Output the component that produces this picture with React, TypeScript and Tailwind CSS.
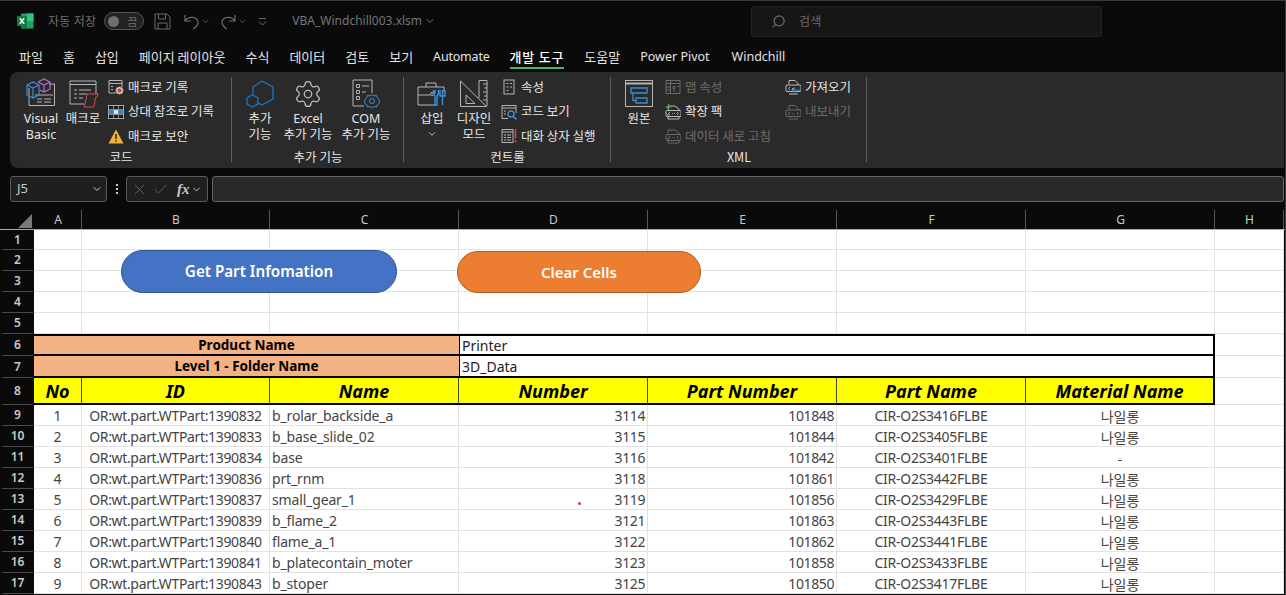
import React from 'react';
import { Check, ChevronDown, Search, Settings, X } from 'lucide-react';

const FONT = '"Noto Sans", "Noto Sans CJK KR", sans-serif';
const KR = '"Noto Sans CJK KR", "Noto Sans", sans-serif';

const GRID = 'grid grid-rows-[minmax(0,1fr)] grid-cols-[34px_48px_188px_189px_189px_189px_189px_189px_69px]';

const parts = [
  ['1', 'OR:wt.part.WTPart:1390832', 'b_rolar_backside_a', '3114', '101848', 'CIR-O2S3416FLBE', '나일롱'],
  ['2', 'OR:wt.part.WTPart:1390833', 'b_base_slide_02', '3115', '101844', 'CIR-O2S3405FLBE', '나일롱'],
  ['3', 'OR:wt.part.WTPart:1390834', 'base', '3116', '101842', 'CIR-O2S3401FLBE', '-'],
  ['4', 'OR:wt.part.WTPart:1390836', 'prt_rnm', '3118', '101861', 'CIR-O2S3442FLBE', '나일롱'],
  ['5', 'OR:wt.part.WTPart:1390837', 'small_gear_1', '3119', '101856', 'CIR-O2S3429FLBE', '나일롱'],
  ['6', 'OR:wt.part.WTPart:1390839', 'b_flame_2', '3121', '101863', 'CIR-O2S3443FLBE', '나일롱'],
  ['7', 'OR:wt.part.WTPart:1390840', 'flame_a_1', '3122', '101862', 'CIR-O2S3441FLBE', '나일롱'],
  ['8', 'OR:wt.part.WTPart:1390841', 'b_platecontain_moter', '3123', '101858', 'CIR-O2S3433FLBE', '나일롱'],
  ['9', 'OR:wt.part.WTPart:1390843', 'b_stoper', '3125', '101850', 'CIR-O2S3417FLBE', '나일롱'],
];

const tabs = ['파일', '홈', '삽입', '페이지 레이아웃', '수식', '데이터', '검토', '보기'];

const Ico: React.FC<{ s?: number; children: React.ReactNode; className?: string }> = ({ s = 16, children, className }) => (
  <svg width={s} height={s} viewBox={`0 0 ${s} ${s}`} fill="none" stroke="#b5b5b5" strokeWidth="1" className={className}>
    {children}
  </svg>
);

const ExcelLogo = () => (
  <svg width="17" height="16" viewBox="0 0 17 16">
    <rect x="4" y="0.5" width="12.5" height="15" rx="1" fill="#21a366" />
    <rect x="10" y="0.5" width="6.5" height="7.5" fill="#33c481" />
    <rect x="4" y="8" width="6" height="7.5" fill="#107c41" />
    <rect x="0" y="3" width="10" height="10" rx="1" fill="#107c41" />
    <path d="M2.8 5.3 L7.2 10.7 M7.2 5.3 L2.8 10.7" stroke="#fff" strokeWidth="1.4" />
  </svg>
);

const VisualBasicIcon = () => (
  <Ico s={32}>
    <path d="M4 10 V27.5 H29.5 V6 H24 M10 17 H28 M12 21 H17 M19 21 H26 M12 24 H17 M19 24 H26" />
    <path d="M2 7 L8 4 L14 7 V17 L8 20 L2 17 Z M2 7 L8 10 L14 7 M8 10 V20" stroke="#3a8fd6" strokeWidth="1.2" />
    <path d="M13 4 L19 1 L25 4 V11 L19 14 L15 12 M13 4 L19 7 L25 4 M19 7 V14" stroke="#b56bd3" strokeWidth="1.2" />
  </Ico>
);

const MacroIcon = () => (
  <Ico s={32}>
    <path d="M3 3 H29 V16 M3 3 V26 H17 M3 6.500 H29 M7 12 H10 M12 12 H24 M7 16 H10 M12 16 H20 M7 20 H10 M12 20 H16" />
    <path d="M20 16 H31 L30 19 H28.500 L27 29 H17 L18 26 L20 16 Z" stroke="#cf4b4a" strokeWidth="1" fill="#2a2a2a" />
  </Ico>
);

const RecordIcon = () => (
  <Ico>
    <path d="M1 1.5 H14 V8 M1 1.5 V14 H8 M1 4.5 H14 M3 7.5 H5 M3 10.5 H5" />
    <circle cx="11.5" cy="11.5" r="3.6" fill="#e9e9e9" stroke="#999" />
    <circle cx="11.5" cy="11.5" r="2.2" fill="#d9403c" stroke="none" />
  </Ico>
);

const RelativeIcon = () => (
  <svg width="16" height="14" viewBox="0 0 16 14">
    <rect x="0.5" y="0.5" width="15" height="13" fill="#1d1d1d" stroke="#a8a8a8" />
    <rect x="1" y="5" width="14" height="4" fill="#2f86d6" />
    <rect x="6" y="5" width="4" height="4" fill="#cfe6f8" />
    <path d="M5.500 1 V13 M10.500 1 V13 M1 4.500 H15 M1 9.500 H15" stroke="#8a8a8a" strokeWidth="1" />
  </svg>
);

const WarnIcon = () => (
  <svg width="16" height="15" viewBox="0 0 16 15">
    <path d="M8 0.5 L15.5 14.5 H0.5 Z" fill="#efb239" />
    <path d="M8 5 V10 M8 11.2 V12.8" stroke="#33240a" strokeWidth="1.5" />
  </svg>
);

const AddinIcon = () => (
  <svg width="28" height="28" viewBox="0 0 28 28" fill="none" stroke="#1f73bd" strokeWidth="1.3">
    <path d="M16 1 L27 7 V19 L16 25 L11 22 M7 15 V7 L16 1" />
    <path d="M6.5 15 L12 18 V24 L6.5 27 L1 24 V18 Z" />
  </svg>
);

const ComIcon = () => (
  <Ico s={30}>
    <path d="M2 1 H21 V14 M2 1 V27 H13" />
    <path d="M5.5 5.5 H8.5 V8.5 H5.5 Z M5.5 11.5 H8.5 V14.5 H5.5 Z M5.5 17.5 H8.5 V20.5 H5.5 Z M11 7 H18 M11 13 H15" />
    <circle cx="21" cy="22" r="2.5" stroke="#3a8fd6" />
    <path d="M21 15.5 L23 17 L25.5 16.5 L26.5 19 L28.5 20.5 L28 22 L28.5 24 L26.5 25.5 L25.5 28 L23 27.5 L21 29 L19 27.5 L16.5 28 L15.5 25.5 L13.5 24 L14 22 L13.5 20.5 L15.5 19 L16.5 16.5 L19 17 Z" stroke="#3a8fd6" fill="none" />
  </Ico>
);

const ToolboxIcon = () => (
  <Ico s={30}>
    <path d="M1 8 H27 V13 M1 8 V26 H19 M1 16 H13 M9 8 V4 H19 V8" />
    <circle cx="15" cy="15" r="1.5" />
    <path d="M18 11 V15 M21.5 11 V15 L20 17 V26 H18 V17 L16.5 15 V11" stroke="#3a8fd6" strokeWidth="1.4" />
    <path d="M25.5 11 V26 M28 11 V17 H23 V11" stroke="#3a8fd6" strokeWidth="1.4" />
  </Ico>
);

const DesignIcon = () => (
  <Ico s={30}>
    <path d="M1.5 2 L27.5 27.5 H1.5 Z M7 16 L16 24.5 H7 Z" />
    <path d="M20 1.5 H28 V27 M20 1.5 V19 M24 5 H28 M25 9 H28 M24 13 H28 M25 17 H28 M24 21 H28" />
  </Ico>
);

const PropsIcon = () => (
  <Ico>
    <rect x="3" y="1" width="10" height="14" />
    <path d="M5.5 4.5 H7.5 M9 4.5 H11 M5.5 8 H7.5 M9 8 H11 M5.5 11.5 H7.5" />
  </Ico>
);

const CodeIcon = () => (
  <Ico>
    <path d="M1 1.5 H15 V9 M1 1.5 V14.5 H7 M1 4 H15 M3 7 H5 M3 10 H5" />
    <circle cx="10" cy="10" r="3" stroke="#3a8fd6" strokeWidth="1.4" />
    <path d="M12.2 12.2 L15.5 15.5" stroke="#3a8fd6" strokeWidth="1.6" />
  </Ico>
);

const DialogIcon = () => (
  <Ico>
    <path d="M1 1.5 H12 V14.5 H1 Z M1 4 H12 M3 7 H5 M6 7 H10 M3 9.5 H5 M6 9.5 H10 M3 12 H5 M6 12 H10" />
    <path d="M14.5 1 V10.5 M14.5 12 V14.5" stroke="#d9403c" strokeWidth="1.6" />
  </Ico>
);

const SourceIcon = () => (
  <Ico s={28}>
    <rect x="0.5" y="0.5" width="27" height="26" />
    <path d="M0.5 3.5 H27.5" strokeWidth="2" />
    <path d="M6 8 H22 V13 H6 Z M11 18 H22 V23 H11 Z M8 13 V20.5 H11" stroke="#3a8fd6" strokeWidth="1.3" />
  </Ico>
);

const MapIcon = () => (
  <Ico>
    <path d="M1 1.5 H15 V14.5 H1 Z M1 4.5 H15 M5.5 1.5 V14.5 M1 8 H5.5 M1 11 H5.5 M8 7.5 H10 V9.5 H8 Z M12 7.5 H14 M8 11.5 H10" stroke="#6a6a6a" />
  </Ico>
);

const PackIcon: React.FC<{ plus?: boolean; dim?: boolean }> = ({ plus, dim }) => {
  const c = dim ? '#6a6a6a' : '#bbbbbb';
  return (
    <Ico>
      <path d="M3 5 V2 H10 L14 5 V7 M3 15 H14 V12 M3 10 V15" stroke={c} />
      <rect x="1" y="6.5" width="15" height="6" rx="1" stroke={c} />
      <path d="M5 8 L3.5 9.5 L5 11 M12 8 L13.5 9.5 L12 11 M7 9.5 H7.8 M9.2 9.5 H10" stroke={c} />
      {plus && <path d="M3.5 0 V6 M0.5 3 H6.5" stroke="#4caf6a" strokeWidth="1.2" />}
    </Ico>
  );
};

const ImportIcon: React.FC<{ dim?: boolean }> = ({ dim }) => {
  const c = dim ? '#6a6a6a' : '#bbbbbb';
  return (
    <Ico>
      <path d="M4 5 V1.5 H10 L13 4.5 V6 M4 15 H13" stroke={c} />
      <rect x="1" y="6" width="15" height="6.5" rx="1" stroke={c} />
      <path d="M5 8 L3.5 9.5 L5 11 M7 9.5 H8 M9.5 9.5 H10" stroke={c} />
      {dim ? (
        <path d="M12 8 L13.5 9.5 L12 11" stroke={c} />
      ) : (
        <path d="M16 11 H7 M10 8.5 L7 11 L10 13.5" stroke="#3a8fd6" strokeWidth="1.2" />
      )}
    </Ico>
  );
};

const Large: React.FC<{ w: string; icon: React.ReactNode; lines: React.ReactNode[] }> = ({ w, icon, lines }) => (
  <div className={`${w} flex flex-col items-center shrink-0 pt-[6px]`}>
    <div className="h-[32px] flex items-center justify-center">{icon}</div>
    <div className="text-[12.5px] leading-[16px] text-[#e6e6e6] text-center whitespace-nowrap">
      {lines.map((l, i) => (
        <div key={i} className="h-[16px]">{l}</div>
      ))}
    </div>
  </div>
);

const Small: React.FC<{ icon: React.ReactNode; label: string; dim?: boolean }> = ({ icon, label, dim }) => (
  <div className="h-[24.5px] flex items-center whitespace-nowrap">
    <div className="w-[20px] flex justify-start shrink-0">{icon}</div>
    <span className={`text-[12.5px] ${dim ? 'text-[#6c6c6c]' : 'text-[#e6e6e6]'}`}>{label}</span>
  </div>
);

const Group: React.FC<{ w: string; label: string; pl: string; children: React.ReactNode }> = ({ w, label, pl, children }) => (
  <div className={`${w} relative shrink-0 flex flex-col h-full`}>
    <div className={`flex h-[76px] ${pl}`}>{children}</div>
    <div className="text-[12.5px] leading-[16px] text-center text-[#e6e6e6] mt-[1px]">{label}</div>
    <div className="absolute right-0 top-[5px] bottom-[6px] w-px bg-[#5e5e5e]" />
  </div>
);

const ColHead: React.FC<{ label: string }> = ({ label }) => (
  <div className="relative flex items-center justify-center text-[12px] text-[#c9c9c9]">
    {label}
    <div className="absolute right-0 top-0 bottom-0 w-px bg-[#555]" />
  </div>
);

const RowHead: React.FC<{ n: number }> = ({ n }) => (
  <div className="ml-[2px] mr-[1px] flex items-center justify-center text-[12px] leading-none font-semibold text-[#c9c9c9] bg-[#0a0a0a] border-b border-[#4a4a4a]">
    {n}
  </div>
);

const Cell: React.FC<{ className?: string; children?: React.ReactNode }> = ({ className = '', children }) => (
  <div className={`flex items-center min-w-0 pt-[2px] bg-white whitespace-nowrap leading-none border-r border-b border-[#e2e2e2] text-[14px] text-[#444] ${className}`}>
    {children}
  </div>
);

const BlankRow: React.FC<{ n: number; h: string }> = ({ n, h }) => (
  <div className={`${GRID} ${h}`}>
    <RowHead n={n} />
    {[0, 1, 2, 3, 4, 5, 6, 7].map((c) => (
      <Cell key={c} />
    ))}
  </div>
);

const MergedRow: React.FC<{ n: number; label: string; value: string; top?: boolean }> = ({ n, label, value, top }) => (
  <div className={`${GRID} h-[22px]`}>
    <RowHead n={n} />
    <div className={`col-span-3 flex items-center justify-center pt-[1px] leading-none bg-[#f4b183] text-[13.5px] font-bold text-black border-b-2 border-black ${top ? 'border-t-2' : ''}`}>
      {label}
    </div>
    <div className={`col-span-4 flex items-center pt-[1px] leading-none pl-[2px] bg-white text-[14px] text-[#222] border-l border-r-2 border-b-2 border-black ${top ? 'border-t-2' : ''}`}>
      {value}
    </div>
    <Cell />
  </div>
);

const HEADERS = ['No', 'ID', 'Name', 'Number', 'Part Number', 'Part Name', 'Material Name'];

export default function App() {
  return (
    <div className="h-[595px] w-[1286px] overflow-hidden flex flex-col bg-[#0a0a0a] border-t border-r border-[#3c3c3c]" style={{ fontFamily: FONT }}>
      {/* Title bar */}
      <div className="h-[40px] shrink-0 flex items-center pl-[17px] text-[12px] text-[#6f6f6f]" style={{ fontFamily: KR }}>
        <ExcelLogo />
        <span className="ml-[14px] tracking-[0.3px]">자동 저장</span>
        <div className="ml-[8px] w-[40px] h-[18px] rounded-full border border-[#555] bg-[#222] flex items-center justify-between pl-[3px] pr-[6px]">
          <div className="w-[11px] h-[11px] rounded-full bg-[#6e6e6e]" />
          <span className="text-[11px] leading-none">끔</span>
        </div>
        <svg className="ml-[10px]" width="17" height="17" viewBox="0 0 17 17" fill="none" stroke="#6b6b6b">
          <path d="M1 1 H13 L16 4 V16 H1 Z M4.5 1 V6 H11.5 V1 M4 16 V10 H13 V16" />
        </svg>
        <svg className="ml-[12px]" width="17" height="17" viewBox="0 0 17 17" fill="none" stroke="#6b6b6b" strokeWidth="1.2">
          <path d="M2 2 V8 H8 M2 8 C5 3 14 3 15 9 C15.500 12 13 14 10 16" />
        </svg>
        <ChevronDown size={9} className="ml-[1px] text-[#6b6b6b]" />
        <svg className="ml-[10px]" width="17" height="17" viewBox="0 0 17 17" fill="none" stroke="#6b6b6b" strokeWidth="1.2">
          <path d="M15 2 V8 H9 M15 8 C12 3 3 3 2 9 C1.500 12 4 14 7 16" />
        </svg>
        <ChevronDown size={9} className="ml-[1px] text-[#6b6b6b]" />
        <svg className="ml-[11px]" width="9" height="9" viewBox="0 0 9 9" fill="none" stroke="#6b6b6b">
          <path d="M1 1.500 H8 M1 4.500 L4.500 8 L8 4.500" />
        </svg>
        <span className="ml-[25px] text-[12px] text-[#757575]" style={{ fontFamily: FONT }}>
          VBA_Windchill003.xlsm
        </span>
        <ChevronDown size={12} className="ml-[2px] text-[#757575]" />
        <div className="ml-[315px] w-[351px] h-[31px] rounded-[3px] bg-[#161616] border border-[#222] flex items-center pl-[19px] text-[#6a6a6a]">
          <Search size={15} className="-scale-x-100" />
          <span className="ml-[13px] text-[12px]">검색</span>
        </div>
      </div>

      {/* Tabs */}
      <div className="h-[31px] shrink-0 flex items-center gap-[20px] pl-[19px] text-[13px] text-[#e4e4e4]" style={{ fontFamily: KR }}>
        {tabs.map((t) => (
          <span key={t}>{t}</span>
        ))}
        <span className="text-[12.5px] tracking-[-0.2px] pt-[2px]" style={{ fontFamily: FONT }}>Automate</span>
        <span className="relative font-medium text-white tracking-[0.8px]">
          개발 도구
          <span className="absolute left-0 right-0 -bottom-[3px] h-[2px] bg-[#4caf72]" />
        </span>
        <span>도움말</span>
        <span className="text-[12.5px] pt-[2px]" style={{ fontFamily: FONT }}>Power Pivot</span>
        <span className="text-[12.5px] ml-[2px] pt-[2px]" style={{ fontFamily: FONT }}>Windchill</span>
      </div>

      {/* Ribbon */}
      <div className="h-[96px] shrink-0 ml-[10px] mr-[1px] rounded-l-[8px] bg-[#2a2a2a] flex" style={{ fontFamily: KR }}>
        <Group w="w-[222px]" label="코드" pl="pl-[15px]">
          <Large w="w-[32px]" icon={<VisualBasicIcon />} lines={[<span style={{ fontFamily: FONT }}>Visual</span>, <span style={{ fontFamily: FONT }}>Basic</span>]} />
          <Large w="w-[36px] ml-[8px]" icon={<MacroIcon />} lines={['매크로']} />
          <div className="ml-[7px] pt-[3px]">
            <Small icon={<RecordIcon />} label="매크로 기록" />
            <Small icon={<RelativeIcon />} label="상대 참조로 기록" />
            <Small icon={<WarnIcon />} label="매크로 보안" />
          </div>
        </Group>
        <Group w="w-[172px]" label="추가 기능" pl="pl-[12px]">
          <Large w="w-[32px]" icon={<AddinIcon />} lines={['추가', '기능']} />
          <Large w="w-[52px] ml-[6px]" icon={<Settings size={30} strokeWidth={1} color="#bdbdbd" />} lines={[<span style={{ fontFamily: FONT }}>Excel</span>, '추가 기능']} />
          <Large w="w-[52px] ml-[6px]" icon={<ComIcon />} lines={[<span style={{ fontFamily: FONT }}>COM</span>, '추가 기능']} />
        </Group>
        <Group w="w-[207px]" label="컨트롤" pl="pl-[12px]">
          <Large w="w-[32px]" icon={<ToolboxIcon />} lines={['삽입', <ChevronDown key="c" size={10} className="mx-auto mt-[3px]" />]} />
          <Large w="w-[40px] ml-[6px]" icon={<DesignIcon />} lines={['디자인', '모드']} />
          <div className="ml-[7px] pt-[3px]">
            <Small icon={<PropsIcon />} label="속성" />
            <Small icon={<CodeIcon />} label="코드 보기" />
            <Small icon={<DialogIcon />} label="대화 상자 실행" />
          </div>
        </Group>
        <Group w="w-[256px]" label="XML" pl="pl-[14px]">
          <Large w="w-[28px]" icon={<SourceIcon />} lines={['원본']} />
          <div className="ml-[12px] pt-[3px] w-[120px]">
            <Small icon={<MapIcon />} label="맵 속성" dim />
            <Small icon={<PackIcon plus />} label="확장 팩" />
            <Small icon={<PackIcon dim />} label="데이터 새로 고침" dim />
          </div>
          <div className="pt-[3px]">
            <Small icon={<ImportIcon />} label="가져오기" />
            <Small icon={<ImportIcon dim />} label="내보내기" dim />
          </div>
        </Group>
      </div>

      {/* Formula bar */}
      <div className="h-[26px] shrink-0 mt-[8px] ml-[10px] mr-[1px] flex items-stretch text-[#c9c9c9]">
        <div className="w-[97px] rounded-[3px] border border-[#5a5a5a] bg-[#1f1f1f] flex items-center justify-between pl-[6px] pr-[3px] text-[13px]">
          J5
          <ChevronDown size={12} />
        </div>
        <div className="w-[19px] flex flex-col items-center justify-center gap-[2px]">
          <span className="w-[2px] h-[2px] bg-[#ccc]" />
          <span className="w-[2px] h-[2px] bg-[#ccc]" />
          <span className="w-[2px] h-[2px] bg-[#ccc]" />
        </div>
        <div className="w-[82px] rounded-[3px] border border-[#5a5a5a] bg-[#1f1f1f] flex items-center pl-[4px]">
          <X size={17} strokeWidth={1} className="text-[#777]" />
          <Check size={17} strokeWidth={1} className="ml-[4px] text-[#777]" />
          <span className="ml-[8px] text-[15px] italic font-bold" style={{ fontFamily: '"Liberation Serif", serif' }}>fx</span>
          <ChevronDown size={11} className="ml-[1px]" />
        </div>
        <div className="ml-[4px] flex-1 rounded-[3px] border border-[#666] bg-[#292929]" />
      </div>

      {/* Sheet */}
      <div className="mt-[8px] flex-1 min-h-0 mb-[1px] overflow-hidden relative">
        <div className={`${GRID} h-[20px] border-b border-[#a8a8a8]`}>
          <div className="relative">
            <div className="absolute right-[2px] bottom-[1px] w-0 h-0 border-l-[14px] border-l-transparent border-b-[14px] border-b-[#7a7a7a]" />
          </div>
          {['A', 'B', 'C', 'D', 'E', 'F', 'G', 'H'].map((c) => (
            <ColHead key={c} label={c} />
          ))}
        </div>

        <BlankRow n={1} h="h-[20px]" />
        <BlankRow n={2} h="h-[21px]" />
        <BlankRow n={3} h="h-[21px]" />
        <BlankRow n={4} h="h-[21px]" />
        <BlankRow n={5} h="h-[21px]" />
        <MergedRow n={6} label="Product Name" value="Printer" top />
        <MergedRow n={7} label="Level 1 - Folder Name" value="3D_Data" />

        <div className={`${GRID} h-[27px]`}>
          <RowHead n={8} />
          {HEADERS.map((h, i) => (
            <div
              key={h}
              className={`flex items-center justify-center whitespace-nowrap pt-[1px] leading-none bg-[#ffff00] text-[18px] font-bold italic text-black border-b-2 border-black ${i === 6 ? 'border-r-2' : 'border-r border-r-[#444]'}`}
            >
              {h}
            </div>
          ))}
          <Cell />
        </div>

        {parts.map((p, i) => (
          <div key={p[0]} className={`${GRID} h-[21px]`}>
            <RowHead n={i + 9} />
            <Cell className="justify-center">{p[0]}</Cell>
            <Cell className="justify-center tracking-[-0.35px]">{p[1]}</Cell>
            <Cell className="pl-[2px] tracking-[-0.15px]">{p[2]}</Cell>
            <Cell className="justify-end pr-[2px] tracking-[-0.4px]">{p[3]}</Cell>
            <Cell className="justify-end pr-[2px] tracking-[-0.4px]">{p[4]}</Cell>
            <Cell className="justify-center tracking-[-0.27px]">{p[5]}</Cell>
            <Cell className="justify-center">
              <span style={{ fontFamily: KR }}>{p[6]}</span>
            </Cell>
            <Cell />
          </div>
        ))}

        {/* Shapes floating over the sheet */}
        <div className="absolute left-[121px] top-[40px] w-[276px] h-[43px] rounded-full bg-[#4472c4] border border-[#2f528f] flex items-center justify-center text-[15.2px] font-semibold text-white">
          Get Part Infomation
        </div>
        <div className="absolute left-[457px] top-[41px] w-[244px] h-[42px] rounded-full bg-[#ed7d31] border border-[#ae5a21] flex items-center justify-center text-[15px] font-semibold text-white">
          Clear Cells
        </div>
        <div className="absolute left-[578px] top-[292px] w-[3px] h-[3px] rounded-full bg-[#e0323c]" />
      </div>
    </div>
  );
}
